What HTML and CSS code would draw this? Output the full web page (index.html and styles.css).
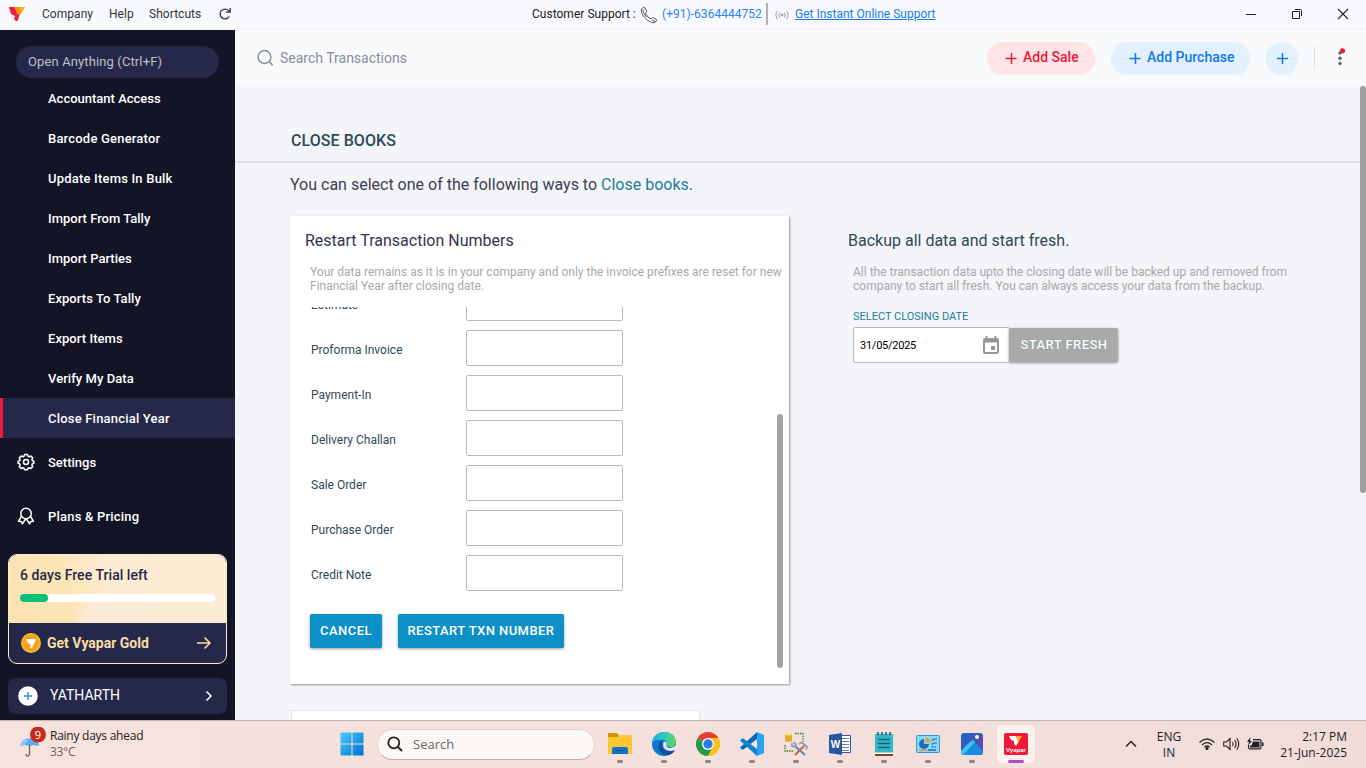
FILE: index.html
```html
<!DOCTYPE html>
<html lang="en">
<head>
<meta charset="utf-8">
<title>Close Books</title>
<link rel="stylesheet" href="styles.css">
</head>
<body>
<header class="titlebar">
  <svg class="logo" width="18" height="16" viewBox="0 0 18 16"><path d="M1 1h7l4 6-2 7-1.500 1.500L6 13l1-3-4-2z" fill="#ef1c42"/><path d="M6 1h11l-5 8-3-1z" fill="#f68b1f"/><path d="M11 1h6l-4 7z" fill="#fbb21c"/></svg>
  <nav class="menus"><span class="m1">Company</span><span class="m2">Help</span><span class="m3">Shortcuts</span>
    <svg width="14" height="14" viewBox="0 0 14 14" fill="none" stroke="#333" stroke-width="1.300"><path d="M11.200 9.500A4.900 4.900 0 1 1 10.600 3.600L12 5M12.200 1v4.200H8"/></svg></nav>
  <div class="support"><span class="cs">Customer Support :</span>
    <svg class="phone" width="18" height="18" viewBox="0 0 18 18" fill="none" stroke="#555" stroke-width="1"><path d="M3 1.500 1.500 3c-.8 2.500 1 6.500 4 9.500s7 4.800 9.500 4l1.600-1.700c.4-.5.3-1-.2-1.300l-3-1.800c-.5-.3-1-.2-1.300.2l-.8.9C9 12.300 6 9.300 5.400 7.200l1-1c.3-.3.4-.7.2-1.200L4.700 1.700C4.300 1.100 3.500 1 3 1.500zM3 3.500c-.3 2 1.500 5.300 3.800 7.700M12 14l3 1.500"/></svg>
    <span class="num">(+91)-6364444752</span><i class="bar"></i>
    <svg class="signal" width="14" height="12" viewBox="0 0 14 12" fill="none" stroke="#9a9cab"><circle cx="7" cy="6" r="1" fill="#9a9cab"/><path d="M4.700 3.500a4 4 0 0 0 0 5M9.300 3.500a4 4 0 0 1 0 5M2.600 1.800a6 6 0 0 0 0 8.400M11.400 1.800a6 6 0 0 1 0 8.400"/></svg>
    <a class="online">Get Instant Online Support</a></div>
  <div class="window-controls">
    <svg width="12" height="12" viewBox="0 0 12 12"><path d="M1 6.500h10" stroke="#222"/></svg>
    <svg width="12" height="12" viewBox="0 0 12 12" fill="none" stroke="#222"><path d="M1.500 3.500h7v7h-7zM4 1.500h5.500q1 0 1 1V8"/></svg>
    <svg width="12" height="12" viewBox="0 0 12 12"><path d="m1 1 10 10M11 1 1 11" stroke="#222" stroke-width="1.100"/></svg>
  </div>
</header>
<div class="app">
  <aside class="sidebar">
    <div class="quick"><span>Open Anything (Ctrl+F)</span></div>
    <ul class="utilities">
      <li><span>Accountant Access</span></li><li class="wide"><span>Barcode Generator</span></li><li class="wide"><span>Update Items In Bulk</span></li><li><span>Import From Tally</span></li><li><span>Import Parties</span></li><li class="snug"><span>Exports To Tally</span></li><li class="snug"><span>Export Items</span></li><li class="snug"><span>Verify My Data</span></li><li class="active wide"><span>Close Financial Year</span></li>
    </ul>
    <div class="side-link settings">
      <svg width="18" height="18" viewBox="0 0 18 18" fill="none" stroke="#fff" stroke-width="1.500" stroke-linejoin="round"><circle cx="9" cy="9" r="2.500"/><path d="M7.600 1.600h2.800l.6 1.700 1.100.5 1.700-.8 1.900 1.900-.8 1.700.5 1.100 1.500.5v2l-1.500.6-.5 1.100.8 1.700-1.900 1.900-1.700-.8-1.100.5-.6 1.500H7.600L7 15.200l-1.100-.5-1.700.8-1.900-1.900.8-1.700-.5-1.100-1.500-.6v-2l1.500-.5.500-1.100-.8-1.700L4.200 3l1.700.8L7 3.300z"/></svg><span>Settings</span></div>
    <div class="side-link plans wide">
      <svg width="18" height="18" viewBox="0 0 18 18" fill="none" stroke="#fff" stroke-width="1.500" stroke-linejoin="round"><circle cx="9" cy="6.500" r="5.200"/><path d="M4.300 9.500 1.500 14.300l2.700.1 1.200 2.400L8.600 12h.8l3.200 4.800 1.200-2.400 2.700-.1-2.800-4.800"/></svg><span>Plans &amp; Pricing</span></div>
    <div class="trial">
      <div class="trial-info"><b>6 days Free Trial left</b><div class="progress"><i></i></div></div>
      <div class="gold"><svg width="20" height="20" viewBox="0 0 20 20"><circle cx="10" cy="10" r="10" fill="#fbbb35"/><circle cx="10" cy="10" r="8.500" fill="#f5a318"/><path d="M4.800 6h10.400L10.700 15.500l-1.500-.8.400-3.200-3-2z" fill="#fff"/></svg><b>Get Vyapar Gold</b>
      <svg width="16" height="14" viewBox="0 0 16 14" fill="none" stroke="#f8dfa4" stroke-width="1.500"><path d="M1 7h13M8.500 1.500 14 7l-5.500 5.500"/></svg></div>
    </div>
    <div class="company"><svg width="20" height="20" viewBox="0 0 20 20"><circle cx="10" cy="10" r="9.800" fill="#fff"/><path d="M6 10h8M10 6v8" stroke="#3494ef" stroke-width="1.500"/></svg><span>YATHARTH</span><svg width="8" height="12" viewBox="0 0 8 12" fill="none" stroke="#fff" stroke-width="1.500"><path d="m1.500 1.500 4.500 4.500-4.500 4.500"/></svg></div>
  </aside>
  <main class="main">
    <div class="toolbar">
      <svg width="18" height="18" viewBox="0 0 18 18" fill="none" stroke="#8a8ca0" stroke-width="1.500"><circle cx="8.500" cy="8" r="6.400"/><path d="m13.200 12.700 3.400 3.400"/></svg>
      <span class="search-tx">Search Transactions</span>
      <div class="pill sale"><svg width="12" height="12" viewBox="0 0 12 12"><path d="M.5 6.500h11M6.500 1v11" stroke="currentColor" stroke-width="1.500"/></svg><span>Add Sale</span></div>
      <div class="pill purchase"><svg width="12" height="12" viewBox="0 0 12 12"><path d="M.5 6.500h11M6.500 1v11" stroke="currentColor" stroke-width="1.500"/></svg><span>Add Purchase</span></div>
      <div class="pill plus"><svg width="12" height="12" viewBox="0 0 12 12"><path d="M1 6.500h11M6.500 1v11" stroke="currentColor" stroke-width="1.500"/></svg></div>
      <i class="tool-divider"></i>
      <svg class="kebab" width="12" height="20" viewBox="0 0 12 20" fill="#5f6276"><circle cx="4" cy="5" r="1.700"/><circle cx="4" cy="10.200" r="1.700"/><circle cx="4" cy="15.400" r="1.700"/><circle cx="6.500" cy="2.800" r="2.600" fill="#ed1a3b"/></svg>
    </div>
    <div class="viewport">
      <div class="page">
        <h1><span>CLOSE BOOKS</span></h1>
        <p class="intro"><span>You can select one of the following ways to <em>Close books</em>.</span></p>
        <div class="columns">
          <section class="card">
            <h2><span>Restart Transaction Numbers</span></h2>
            <p class="desc"><span>Your data remains as it is in your company and only the invoice prefixes are reset for new</span><br><span>Financial Year after closing date.</span></p>
            <div class="scroll">
              <div class="rows">
                <label><span>Estimate</span><i class="box"></i></label>
                <label><span>Proforma Invoice</span><i class="box"></i></label>
                <label><span>Payment-In</span><i class="box"></i></label>
                <label><span>Delivery Challan</span><i class="box"></i></label>
                <label><span>Sale Order</span><i class="box"></i></label>
                <label><span>Purchase Order</span><i class="box"></i></label>
                <label><span>Credit Note</span><i class="box"></i></label>
                <div class="actions"><button class="cancel">CANCEL</button><button class="restart">RESTART TXN NUMBER</button></div>
              </div>
              <i class="thumb"></i>
            </div>
          </section>
          <section class="fresh">
            <h2><span>Backup all data and start fresh.</span></h2>
            <p class="desc"><span>All the transaction data upto the closing date will be backed up and removed from</span><br><span>company to start all fresh. You can always access your data from the backup.</span></p>
            <div class="date-label"><span>SELECT CLOSING DATE</span></div>
            <div class="date-row"><div class="date"><span>31/05/2025</span><svg width="16" height="18" viewBox="0 0 16 18"><path d="M2.500 0h2v2h7V0h2v2h.5q2 0 2 2v12q0 2-2 2H2q-2 0-2-2V4q0-2 2-2h.5zM2 6.500V16h12V6.500zM8 10h4v4H8z" fill="#969696" fill-rule="evenodd"/></svg></div><button class="start">START FRESH</button></div>
          </section>
        </div>
        <div class="next-card"></div>
      </div>
      <i class="page-thumb"></i>
    </div>
  </main>
</div>
<footer class="taskbar">
  <div class="weather"><svg width="30" height="34" viewBox="0 0 30 34"><path d="M4 19Q7 10 15 11q7 1 8 8l-5-1-4 1-5-1z" fill="#5aa9ec"/><path d="M4 19Q7 10 15 11q-4 2-6 7z" fill="#8bc8f6"/><path d="M13.500 18v9q-.5 2-2 2T10 27" fill="none" stroke="#666" stroke-width="1.300"/><circle cx="22" cy="7.500" r="8" fill="#c42b1c"/><text x="22" y="11.500" text-anchor="middle" class="badge">9</text></svg><div class="wtext"><span class="cond">Rainy days ahead</span><span class="temp">33°C</span></div></div>
  <svg class="win" width="24" height="24" viewBox="0 0 24 24"><defs><linearGradient id="w" x2="1" y2="1"><stop stop-color="#4ac8fb"/><stop offset="1" stop-color="#0072cf"/></linearGradient></defs><path d="M.500.5h11v11H.5zM12.500.5h11v11h-11zM.5 12.500h11v11H.5zM12.500 12.500h11v11h-11z" fill="url(#w)"/></svg>
  <div class="tb-search"><svg width="16" height="16" viewBox="0 0 16 16" fill="none" stroke="#222" stroke-width="1.800"><circle cx="6.800" cy="6.800" r="5.500"/><path d="m11 11 4 4"/></svg><span>Search</span></div>
  <div class="apps">
    <div class="tile"><svg viewBox="0 0 24 24"><path d="M0 2q0-1 1-1h8l2 3v4H0z" fill="#dc9200"/><path d="M0 5h10l2-2h11q1 0 1 1v18H0z" fill="#fcc934"/><path d="M4 22v-5q0-2 2-2h12q2 0 2 2v5z" fill="#0e74c9"/><path d="M7 18.500h10" stroke="#064f91"/></svg></div>
    <div class="tile"><svg viewBox="0 0 24 24"><defs><linearGradient id="eg"><stop stop-color="#24abe7"/><stop offset=".5" stop-color="#30c8c3"/><stop offset="1" stop-color="#63d84e"/></linearGradient></defs><circle cx="12" cy="12" r="12" fill="#0b78cf"/><path d="M0 11C2-4 23-3 24 9q0 6-6 6-4 0-3-3-1-5-6-4Q3 7 0 11z" fill="url(#eg)"/><path d="M9 9c-5 4-2 13 5 14 4 .5 7-1 9-5-8 4-15-1-12-8z" fill="#104f9c"/><path d="M11.500 10q2-1 3 1 .5 1-.2 2.200Q14.500 16 18 16q3 0 6-3v4l-1.500 1.300Q17 20 13.500 17.500 10 14.500 11.500 10z" fill="#f5e1dc"/></svg></div>
    <div class="tile"><svg viewBox="0 0 24 24"><path d="M12 12 1.600 6A12 12 0 0 1 22.400 6z" fill="#e63d31"/><path d="M12 12 22.400 6A12 12 0 0 1 12 24z" fill="#fcc41a"/><path d="M12 12 1.600 6A12 12 0 0 0 12 24l5-9z" fill="#249a48"/><path d="M12 6h10.400q4 9-3 15.500L12 24l5-9z" fill="#fcc41a"/><circle cx="12" cy="12" r="6" fill="#fff"/><circle cx="12" cy="12" r="4.700" fill="#2d79e6"/></svg></div>
    <div class="tile"><svg viewBox="0 0 24 24"><path d="M17 0v7L3.500 17.500H2l-2-2L17 0z" fill="#0a69b5"/><path d="M17 24v-7L3.500 6.500H2l-2 2L17 24z" fill="#1082cf"/><path d="m17 0 7 3v18l-7 3z" fill="#29a4ef"/></svg></div>
    <div class="tile"><svg viewBox="0 0 24 24"><path d="M11 1.500h8v8M1 13v6h8" fill="none" stroke="#3f7b35" stroke-width="1.300" stroke-dasharray="1.500 1"/><path d="M1 2v7q3 2 7 0V2z" fill="#e0ae2c"/><ellipse cx="4.500" cy="2" rx="3.500" ry="1.500" fill="#f9e28a"/><path d="m11 23 9-9" stroke="#ad7345" stroke-width="2"/><path d="m11 14 10 9" stroke="#71839c" stroke-width="2"/><path d="M8 11v3l3 1 1-2-2-3M15 12l3-1.500 5 4.500-1 2.500" fill="none" stroke="#8fa0b5" stroke-width="1.900"/></svg></div>
    <div class="tile"><svg viewBox="0 0 24 24"><path d="M12 3.500h10.500v17H12z" fill="#fff" stroke="#315da5"/><path d="M14 6.500h7M14 9.500h7M14 12.500h7M14 15.500h7M14 18.500h7" stroke="#5c7fbb"/><path d="m1 3 13-2v22L1 21z" fill="#2b579a"/><text x="7.500" y="15.500" text-anchor="middle" class="word">W</text></svg></div>
    <div class="tile"><svg viewBox="0 0 24 24"><path d="M3 2h18v20H3z" fill="#35b7ca"/><path d="M3 22h18v2H3z" fill="#854715"/><path d="M3 20.500h18v1.500H3z" fill="#fff"/><path d="M6 7.500h12M6 11.500h12M6 15.500h12" stroke="#126375" stroke-width="1.500"/><path d="M6 0v3M10 0v3M14 0v3M18 0v3" stroke="#174a60" stroke-width="1.400"/></svg></div>
    <div class="tile"><svg viewBox="0 0 24 24"><rect x=".5" y="3.500" width="23" height="17" rx="1" fill="#8bd9fa" stroke="#329bd0"/><path d="M8 7v5h5a5 5 0 1 1-5-5" fill="#1871bd"/><path d="M9.500 5.500a5 5 0 0 1 5 5h-5z" fill="#f29a2e"/><path d="M15 8h2l1-1h3M15 12h2l1-1h3M15 15h5" stroke="#1871bd" fill="none" stroke-width="1.200"/><path d="M3 18h8" stroke="#ee8d29" stroke-width="1.500"/><path d="M12 18h8" stroke="#1871bd" stroke-width="1.500"/></svg></div>
    <div class="tile"><svg viewBox="0 0 24 24"><defs><linearGradient id="ph" x2="1" y2="1"><stop stop-color="#176dc5"/><stop offset="1" stop-color="#713cab"/></linearGradient></defs><rect x="1" y="1" width="22" height="22" rx="3" fill="url(#ph)"/><path d="m1 19 10-10q2-1 3 0l9 10v1q0 3-3 3H4q-3 0-3-3z" fill="#198be0"/><path d="m1 19 10-10q2-1 3 0l1 1-12 13q-2-1-2-3z" fill="#3ac7f1"/><circle cx="17" cy="5" r="2" fill="#fff"/></svg></div>
    <div class="tile current"><svg viewBox="0 0 24 24"><rect y="1" width="24" height="22" rx="2" fill="#ed1a3b"/><path d="M5 4h7l3 5-3 5-2-2v-3L7 8z" fill="#fff"/><path d="M12 4h6l-4 7z" fill="#fbad2f"/><text x="12" y="20" text-anchor="middle" class="vy">Vyapar</text></svg></div>
  </div>
  <div class="tray">
    <svg class="chev" width="12" height="8" viewBox="0 0 12 8" fill="none" stroke="#222" stroke-width="1.500"><path d="m1 6.500 5-5 5 5"/></svg>
    <div class="lang"><span>ENG</span><span>IN</span></div>
    <svg class="wifi" width="16" height="12" viewBox="0 0 16 12" fill="none" stroke="#222" stroke-width="1.200"><path d="M.5 4.500q7.500-7 15 0M3 7q5-4.600 10 0M5.300 9.200q2.700-2.400 5.400 0"/><circle cx="8" cy="10.500" r="1" fill="#222"/></svg>
    <svg class="vol" width="17" height="14" viewBox="0 0 17 14" fill="none" stroke="#222" stroke-width="1.100"><path d="M.7 5h2.800L7 1.500v11L3.500 9H.7zM9.500 5q1.300 2 0 4M11.700 3q2.800 4 0 8M13.800 1.200q4 5.800 0 11.600"/></svg>
    <svg class="bat" width="17" height="14" viewBox="0 0 17 14"><path d="M6 2.600h6.500q1.500 0 1.500 1.500v6.300q0 1.500-1.500 1.500H3q-1.500 0-1.500-1.500V8" fill="none" stroke="#222" stroke-width="1.200"/><path d="M6 4.500h6.500v6H3V8.500h1.500zM15 5.500h1.500v3.500H15zM3.500 0 0 5h2L1 8.500 5 4H3z" fill="#222"/></svg>
    <div class="clock"><span>2:17 PM</span><span>21-Jun-2025</span></div>
  </div>
</footer>
</body>
</html>
```
FILE: styles.css
```css
* { box-sizing: border-box; }
body { margin: 0; width: 1366px; height: 768px; overflow: hidden; display: flex; flex-direction: column; font-family: Roboto, "Liberation Sans", sans-serif; white-space: nowrap; }
h1, h2, p, ul { margin: 0; padding: 0; }
svg { display: block; flex: none; }
i, em { font-style: normal; }
span { flex: none; }

.titlebar { height: 30px; flex: none; display: flex; align-items: center; background: #f7f9fd; border-bottom: 2px solid #f3f4f6; font-size: 12px; color: #333; }
.logo { margin-left: 8px; }
.menus { display: flex; align-items: center; margin-left: 16px; width: 490px; }
.m1 { width: 67px; letter-spacing: .05px; }
.m2 { width: 40px; letter-spacing: .05px; }
.m3 { width: 69px; letter-spacing: .05px; }
.support { display: flex; align-items: center; width: 712px; color: #222; }
.cs { width: 108px; letter-spacing: .02px; }
.phone { margin-top: 2px; }
.num { margin-left: 4px; width: 104px; color: #2a85f5; letter-spacing: .03px; }
.bar { width: 2px; height: 22px; background: #afb1b7; }
.signal { margin-left: 7px; margin-top: 2px; }
.online { margin-left: 6px; color: #1b7cf0; text-decoration: underline; }
.window-controls { display: flex; gap: 34px; padding-left: 1px; }

.app { display: flex; flex: 1; min-height: 0; }
.sidebar { width: 235px; flex: none; background: #131426; color: #fff; display: flex; flex-direction: column; padding-top: 16px; font-size: 13px; font-weight: 500; }
.quick { height: 32px; flex: none; margin: 0 16px; padding: 0 0 2px 12px; border-radius: 16px; background: #26284a; display: flex; align-items: center; font-weight: 400; color: #bfc0cd; letter-spacing: .12px; }
.utilities { list-style: none; }
.utilities li { height: 40px; display: flex; align-items: center; padding-left: 48px; }
.wide { letter-spacing: .2px; }
.snug { letter-spacing: .06px; }
.utilities .active { background: #26284a; border-left: 3px solid #ed1a3b; padding-left: 45px; }
.side-link { display: flex; align-items: center; gap: 13px; padding-left: 17px; }
.settings { height: 48px; }
.plans { height: 60px; }
.trial { margin: 8px 8px 0; height: 110px; flex: none; border-radius: 9px; border: 1px solid #fdebcf; background: #26284a; overflow: hidden; }
.trial-info { height: 68px; padding: 12px 11px 0; background: radial-gradient(circle at 105px 78px, #fdebd8 28px, rgba(253,235,216,0) 48px), linear-gradient(70deg, #fde3b3 0%, #fce4b4 28%, #fdebd3 48%, #fdebd3 100%); color: #25274a; font-size: 14px; line-height: 17px; }
.trial-info b { font-weight: 500; letter-spacing: .05px; }
.progress { height: 8px; margin-top: 10px; background: #fff; border-radius: 4px; }
.progress i { display: block; width: 28px; height: 8px; border-radius: 4px; background: #0cc078; }
.gold { height: 40px; display: flex; align-items: center; padding: 0 14px 0 12px; color: #f8dfa4; font-size: 14px; }
.gold b { margin-left: 6px; flex: 1; }
.company { margin: 14px 8px 0; height: 36px; flex: none; border-radius: 8px; background: #26284a; display: flex; align-items: center; padding: 0 14px 0 10px; font-size: 14px; font-weight: 400; }
.company span { flex: 1; padding: 0 0 2px 12px; }

.main { flex: 1; min-width: 0; display: flex; flex-direction: column; }
.toolbar { height: 55px; flex: none; background: #f9fafc; display: flex; align-items: center; padding-left: 21px; font-size: 14px; }
.search-tx { margin-left: 6px; width: 707px; color: #8b8d9e; }
.pill { height: 32px; border-radius: 16px; display: flex; align-items: center; font-weight: 500; flex: none; box-shadow: 0 1px 2px rgba(0,0,0,.06); }
.pill span { margin-left: 6px; padding-bottom: 2px; }
.sale { width: 108px; padding-left: 18px; background: #ffe4e7; color: #ed1a3b; }
.purchase { width: 139px; padding-left: 18px; margin-left: 16px; background: #e3f0ff; color: #1477ea; }
.plus { width: 32px; justify-content: center; margin-left: 16px; background: #e3f0ff; color: #1477ea; }
.tool-divider { width: 1px; height: 24px; margin-left: 16px; background: #e0e1e7; }
.kebab { margin-left: 21px; }

.viewport { flex: 1; min-height: 0; display: flex; background: #f4f5f8; overflow: hidden; border-top: 1px solid #f1f2f5; }
.page { width: 1125px; height: 634px; overflow: hidden; flex: none; }
.page-thumb { width: 6px; height: 407px; border-radius: 3px; background: #9e9e9e; }
h1 { height: 77px; padding: 45px 0 0 56px; border-bottom: 2px solid #dcdddf; font-size: 16px; line-height: 20px; font-weight: 500; color: #2f4a57; letter-spacing: .06px; }
.intro { height: 53px; padding: 11px 0 0 55px; font-size: 16px; line-height: 22px; color: #3f3f55; }
.intro em { color: #1c7da0; }
.columns { display: flex; padding-left: 55px; height: 468px; }
.card { width: 499px; height: 468px; background: #fff; box-shadow: 1px 1px 2px rgba(0,0,0,.4); flex: none; }
h2 { height: 49px; padding: 15px 0 0 15px; font-size: 16px; line-height: 20px; font-weight: 400; color: #33344f; }
.desc { padding-left: 20px; font-size: 12px; line-height: 14px; height: 42px; color: #a9a9a9; }
.scroll { height: 361px; display: flex; justify-content: space-between; overflow: hidden; padding-right: 6px; }
.rows { margin-top: -22px; padding-left: 21px; font-size: 12px; color: #2f4a57; }
.rows label { height: 45px; display: flex; align-items: flex-start; }
.rows label span { width: 155px; line-height: 14px; padding-top: 13px; }
.box { width: 157px; height: 36px; border: 1px solid #b9b9b9; border-radius: 2px; background: #fff; }
.actions { display: flex; gap: 16px; margin: 14px 0 0 -1px; }
button { border: 0; padding: 0 0 2px; height: 34px; border-radius: 2px; background: #0d8fc7; color: #fff; font: 500 13px Roboto, sans-serif; letter-spacing: .44px; box-shadow: 0 1px 3px rgba(0,0,0,.4); }
.cancel { width: 72px; }
.restart { width: 166px; }
.thumb { width: 6px; height: 254px; margin-top: 107px; border-radius: 3px; background: #a3a3a3; }
.fresh { margin-left: 44px; }
.fresh h2 { color: #2f4a57; }
.date-label { margin-left: 20px; height: 20px; line-height: 20px; font-size: 11px; color: #1c7da0; }
.date-row { display: flex; align-items: center; margin-left: 20px; }
.date { width: 157px; height: 36px; border: 1px solid #b9b9b9; border-radius: 2px; background: #fff; display: flex; align-items: center; justify-content: space-between; padding: 0 10px 0 6px; font-size: 11px; letter-spacing: -.25px; color: #000; }
.start { width: 109px; margin-left: -1px; padding-left: 1px; background: #a9a9a9; text-shadow: 0 0 1px #5f8797; }
.next-card { margin: 26px 0 0 56px; width: 409px; height: 30px; background: #fff; border: 1px solid #e5e5e5; }

.taskbar { height: 48px; flex: none; border-top: 1px solid #c0b3b0; padding-bottom: 1px; background: linear-gradient(90deg, #f7e2dd, #f4e0dc 50%, #f0ddda); display: flex; align-items: center; font: 12px/16px "Open Sans", "Noto Sans", sans-serif; color: #222; }
.weather { display: flex; width: 340px; padding-left: 16px; flex: none; }
.wtext, .lang, .clock { display: flex; flex-direction: column; padding-top: 1px; }
.wtext { margin-left: 4px; }
.cond { letter-spacing: -.25px; }
.temp { color: #666; letter-spacing: -.3px; }
.badge { font: 11px "Open Sans", sans-serif; fill: #fff; }
.tb-search { margin-left: 13px; width: 218px; height: 31px; border-radius: 16px; background: #fcf7f5; border: 1px solid #e4d2cd; border-bottom-color: #bfb0ac; display: flex; align-items: center; padding-left: 9px; font-size: 13px; color: #666; }
.tb-search span { margin-left: 10px; }
.apps { display: flex; margin-left: 6px; gap: 6px; }
.tile { width: 38px; height: 38px; border-radius: 4px; display: flex; flex-direction: column; align-items: center; padding-top: 7px; }
.tile svg { width: 24px; height: 24px; }
.tile::after { content: ""; width: 6px; height: 3px; margin-top: 4px; border-radius: 2px; background: #92837f; flex: none; }
.current { background: #fbf1ef; }
.current::after { width: 16px; background: #b14bc2; }
.word { font: bold 10px "Liberation Sans", sans-serif; fill: #fff; }
.vy { font: bold 6px "Liberation Sans", sans-serif; fill: #fff; }
.tray { display: flex; align-items: center; margin-left: 90px; }
.lang { width: 34px; margin-left: 15px; align-items: center; }
.wifi { margin-left: 13px; }
.vol { margin-left: 8px; }
.bat { margin-left: 7px; }
.clock { width: 83px; align-items: flex-end; }
```
